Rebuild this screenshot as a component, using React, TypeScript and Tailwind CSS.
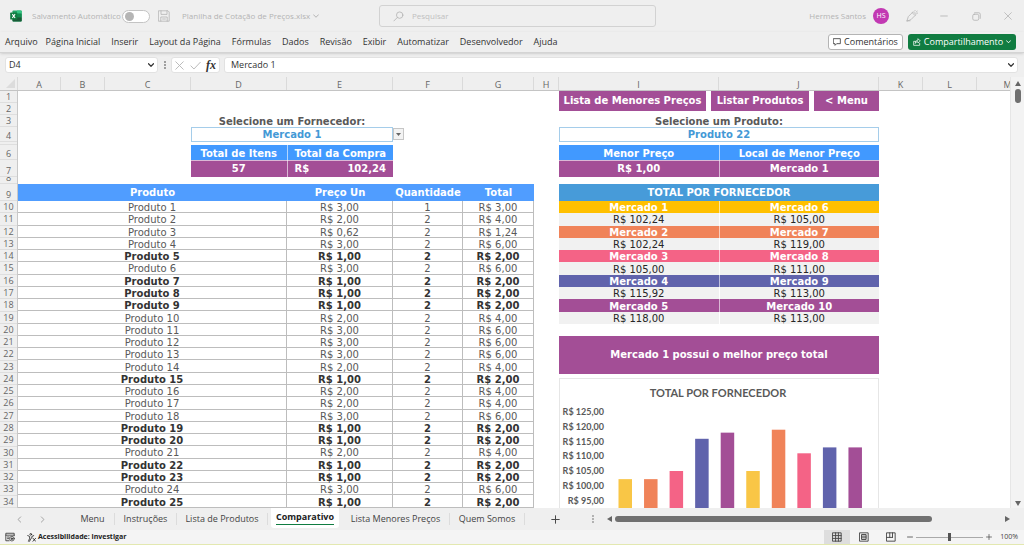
import type React from "react";
import { clsx } from "clsx";

const ribbonTabs = [
	"Arquivo",
	"Página Inicial",
	"Inserir",
	"Layout da Página",
	"Fórmulas",
	"Dados",
	"Revisão",
	"Exibir",
	"Automatizar",
	"Desenvolvedor",
	"Ajuda",
];

const columns = [
	{ name: "A", width: "w-[43px]" },
	{ name: "B", width: "w-11" },
	{ name: "C", width: "w-[86px]" },
	{ name: "D", width: "w-24" },
	{ name: "E", width: "w-[106px]" },
	{ name: "F", width: "w-[70px]" },
	{ name: "G", width: "w-[71px]" },
	{ name: "H", width: "w-[25px]" },
	{ name: "I", width: "w-40" },
	{ name: "J", width: "w-40" },
	{ name: "K", width: "w-11" },
	{ name: "L", width: "w-[54px]" },
	{ name: "M", width: "w-[62px]" },
];

const topRows = [
	{ name: "1", height: "h-3" },
	{ name: "2", height: "h-3" },
	{ name: "3", height: "h-3" },
	{ name: "4", height: "h-[15px]" },
	{ name: "5", height: "h-[3px]" },
	{ name: "6", height: "h-[15px]" },
	{ name: "7", height: "h-[17px]" },
	{ name: "8", height: "h-[7px]" },
	{ name: "9", height: "h-[17px]" },
];

const prices = [
	3, 2, 0.62, 3, 1, 3, 1, 1, 1, 2, 3, 3, 3, 2, 1, 2, 2, 3, 1, 1, 2, 1, 1, 3, 1,
];

const products = prices.map((price, i) => ({
	name: `Produto ${i + 1}`,
	price,
	quantity: i === 0 ? 1 : 2,
	best: price === 1,
}));

const suppliers = [
	{ color: "bg-[#ffc000]", left: ["Mercado 1", 102.24], right: ["Mercado 6", 105] },
	{ color: "bg-[#f08359]", left: ["Mercado 2", 102.24], right: ["Mercado 7", 119] },
	{ color: "bg-[#f46386]", left: ["Mercado 3", 105], right: ["Mercado 8", 111] },
	{ color: "bg-[#6063ac]", left: ["Mercado 4", 115.92], right: ["Mercado 9", 113] },
	{ color: "bg-[#a34e96]", left: ["Mercado 5", 118], right: ["Mercado 10", 113] },
] as const;

const chartTotals = [102.24, 102.24, 105, 115.92, 118, 105, 119, 111, 113, 113];
const chartColors = ["#f9c646", "#f08359", "#f46386", "#6063ac", "#a34e96"];
const chartTicks = [125, 120, 115, 110, 105, 100, 95];

const sheetTabs = [
	{ name: "Menu", width: "w-11" },
	{ name: "Instruções", width: "w-[62px]" },
	{ name: "Lista de Produtos", width: "w-[91px]" },
	{ name: "Comparativo", width: "w-[68px]", active: true },
	{ name: "Lista Menores Preços", width: "w-[108px]" },
	{ name: "Quem Somos", width: "w-[75px]" },
];

const money = (value: number) => `R$ ${value.toFixed(2).replace(".", ",")}`;

type IconProps = {
	children: React.ReactNode;
	size?: number;
	className?: string;
};

const Icon = ({ children, size = 12, className }: IconProps) => (
	<svg
		width={size}
		height={size}
		viewBox="0 0 12 12"
		fill="none"
		stroke="currentColor"
		strokeLinecap="round"
		strokeLinejoin="round"
		className={clsx("shrink-0", className)}
		aria-hidden="true"
	>
		{children}
	</svg>
);

const ExcelLogo = () => (
	<svg width="12" height="12" viewBox="0 0 12 12" className="shrink-0" aria-hidden="true">
		<rect x="2.5" y="0.5" width="9.2" height="11" rx="0.8" fill="#21a366" />
		<path d="M7 .5h4q.7 0 .7.7v2.4H7z" fill="#33c481" />
		<path d="M7 3.6h4.7v3.6H7z" fill="#128a4e" />
		<path d="M2.5 7.2h9.2v3.6q0 .7-.7.7H3.2q-.7 0-.7-.7z" fill="#185c37" />
		<rect x="0.2" y="2.6" width="7" height="7" rx="0.6" fill="#107c41" />
		<path d="M2.3 4.2l2.8 3.8M5.1 4.2L2.3 8" stroke="#fff" strokeWidth="1.1" />
	</svg>
);

const TitleBar = () => (
	<header className="grid h-8 shrink-0 grid-cols-[379px_277px_1fr] items-center text-[8px] text-[#b4b4b4]">
		<div className="flex items-center pl-[10px]">
			<ExcelLogo />
			<label htmlFor="autosave" className="ml-[10px] w-[90px] whitespace-nowrap">
				Salvamento Automático
			</label>
			<span className="flex h-[13px] w-7 items-center rounded-full border border-[#c4c4c4] bg-white">
				<input
					id="autosave"
					type="checkbox"
					role="switch"
					className="ml-[2px] size-[9px] appearance-none rounded-full bg-[#b5b5b5]"
				/>
			</span>
			<button type="button" aria-label="Salvar" className="ml-2">
				<Icon>
					<path d="M.8.8h9.2l1.2 1.2v9.2H.8zM3 .8v3.6h6V.8M2.8 11.2V7h6.4v4.2M4.600 9h2.8" strokeWidth=".8" />
				</Icon>
			</button>
			<button type="button" className="ml-3 flex items-center gap-[3px] whitespace-nowrap">
				Planilha de Cotação de Preços.xlsx
				<Icon size={6}>
					<path d="M1 3.5l5 5 5-5" strokeWidth="2" />
				</Icon>
			</button>
		</div>
		<label className="flex h-[22px] items-center rounded-[3px] border border-[#d2d2d2] pl-[13px]">
			<Icon size={11}>
				<circle cx="7.3" cy="4.5" r="3.5" strokeWidth=".9" />
				<path d="M4.8 7L1 10.8" strokeWidth=".9" />
			</Icon>
			<input
				aria-label="Pesquisar"
				placeholder="Pesquisar"
				className="ml-2 min-w-0 flex-1 bg-transparent outline-none placeholder:text-[#c0c0c0]"
			/>
		</label>
		<div className="flex items-center justify-end">
			<span>Hermes Santos</span>
			<span className="mx-[7px] flex size-4 items-center justify-center rounded-full bg-[#c239b3] text-[7px] text-white">
				HS
			</span>
			<button type="button" aria-label="Recursos" className="flex w-8 justify-center">
				<Icon>
					<path d="M1 10.8l1.3-4.2L6.2 2.7 9 5.5 5.2 9.4zM6.2 2.7l1-1 2.8 2.8-1 1M8.7 1l.4-.6M10 2.2l1.2-1M10.8 3.3l.8-.2M1 10.8h3" strokeWidth=".8" />
				</Icon>
			</button>
			<button type="button" aria-label="Minimizar" className="flex w-8 justify-center">
				<Icon size={8}>
					<path d="M1 6h10" strokeWidth="1.3" />
				</Icon>
			</button>
			<button type="button" aria-label="Restaurar" className="flex w-8 justify-center">
				<Icon size={9}>
					<rect x="1" y="3" width="8" height="8" rx="2" strokeWidth="1.1" />
					<path d="M3.5 1H9q2 0 2 2v5.5" strokeWidth="1.1" />
				</Icon>
			</button>
			<button type="button" aria-label="Fechar" className="flex w-8 justify-center">
				<Icon size={8}>
					<path d="M1 1l10 10M11 1L1 11" strokeWidth="1.2" />
				</Icon>
			</button>
		</div>
	</header>
);

const Ribbon = () => (
	<nav className="flex h-[21px] shrink-0 items-center border-b border-[#d4d4d4] pr-2 pl-[5px] text-[#333] shadow-sm">
		<div className="flex items-center gap-[11px]">
			{ribbonTabs.map((tab) => (
				<button key={tab} type="button" className="whitespace-nowrap first:-mr-[3px]">
					{tab}
				</button>
			))}
		</div>
		<div className="mb-px ml-auto flex gap-[5px] font-medium">
			<button
				type="button"
				className="flex h-4 w-[75px] items-center justify-center gap-[3px] rounded-[3px] border border-[#b4b4b4] bg-white"
			>
				<Icon size={8}>
					<path d="M1 1h10v7.5H5.5L3 11V8.5H1z" strokeWidth="1.2" />
				</Icon>
				Comentários
			</button>
			<button
				type="button"
				className="flex h-4 w-[108px] items-center justify-between rounded-[3px] bg-[#107c41] px-[5px] text-white"
			>
				<Icon size={8}>
					<path d="M4 5H1v6h9V8M3.5 7.5c.3-3 2-4.2 4-4.2V1L11 4.500 7.500 7.500V5.600c-1.800 0-3 .5-4 1.900z" strokeWidth="1.1" />
				</Icon>
				Compartilhamento
				<Icon size={5}>
					<path d="M1 4l5 5 5-5" strokeWidth="2.2" />
				</Icon>
			</button>
		</div>
	</nav>
);

const FormulaBar = () => (
	<div className="flex h-6 shrink-0 items-center pr-[6px] pl-[5px] text-[#333]">
		<label className="flex h-4 w-[153px] items-center rounded-[3px] border border-[#e2e2e2] bg-white px-[3px]">
			<input aria-label="Caixa de nome" defaultValue="D4" className="min-w-0 flex-1 outline-none" />
			<Icon size={6}>
				<path d="M1 3.5l5 5 5-5" strokeWidth="2.4" />
			</Icon>
		</label>
		<Icon size={8} className="mr-[2px] ml-[3px]">
			<path d="M6 1.5v.1M6 6v.1M6 10.5v.1" strokeWidth="2.4" />
		</Icon>
		<div className="flex h-4 w-[49px] items-center justify-between rounded-[3px] border border-[#e2e2e2] bg-white px-[3px] text-[#b4b4b4]">
			<button type="button" aria-label="Cancelar">
				<Icon size={9}>
					<path d="M1 1l10 10M11 1L1 11" strokeWidth="1.2" />
				</Icon>
			</button>
			<button type="button" aria-label="Inserir">
				<Icon size={11}>
					<path d="M1 6.5l3.3 3.3L11.2 2.5" strokeWidth="1" />
				</Icon>
			</button>
			<button
				type="button"
				className="font-['Liberation_Serif',serif] text-[12px] leading-3 font-bold text-[#333] italic"
			>
				fx
			</button>
		</div>
		<label className="ml-1 flex h-4 flex-1 items-center rounded-[3px] border border-[#e2e2e2] bg-white pr-[3px] pl-[6px]">
			<input aria-label="Barra de fórmulas" defaultValue="Mercado 1" className="min-w-0 flex-1 outline-none" />
			<Icon size={6}>
				<path d="M1 3.5l5 5 5-5" strokeWidth="2.4" />
			</Icon>
		</label>
	</div>
);

const ColumnHeaders = () => (
	<div className="flex h-[14px] shrink-0 border-b border-[#c4c4c4] text-[#666]">
		<div className="flex w-[18px] shrink-0 items-end justify-end border-r border-[#dadada] p-[2px]">
			<svg width="9" height="9" viewBox="0 0 9 9" aria-hidden="true">
				<path d="M9 0v9H0z" fill="#dcdcdc" />
			</svg>
		</div>
		{columns.map((column) => (
			<div
				key={column.name}
				className={clsx("shrink-0 border-r border-[#dadada] text-center leading-[15px]", column.width)}
			>
				{column.name}
			</div>
		))}
	</div>
);

const RowHeaders = () => (
	<div className="w-[18px] shrink-0 border-r border-[#c8c8c8] bg-[#efefef] text-center text-[#666]">
		{topRows.map((row) => (
			<div
				key={row.name}
				className={clsx("flex items-end justify-center overflow-hidden border-b border-[#dedede]", row.height)}
			>
				<span className="leading-[10px]">{row.name}</span>
			</div>
		))}
		<div className="grid h-[307px] auto-rows-fr">
			{products.map((product, i) => (
				<div key={product.name} className="border-b border-[#dedede] pt-px leading-[10px]">
					{i + 10}
				</div>
			))}
		</div>
	</div>
);

type PickerProps = {
	id: string;
	label: string;
	value: string;
};

const Picker = ({ id, label, value }: PickerProps) => (
	<>
		<label htmlFor={id} className="block h-3 pt-[2px] text-center leading-[10px] font-bold text-[#595959]">
			{label}
		</label>
		<select
			id={id}
			className="block h-[15px] w-full appearance-none border border-[#a5cdea] bg-white text-center font-bold text-[#4499d6] [text-align-last:center]"
		>
			<option>{value}</option>
		</select>
	</>
);

type SummaryProps = {
	heads: string[];
	cells: React.ReactNode[];
	split: string;
};

const Summary = ({ heads, cells, split }: SummaryProps) => (
	<table className="mt-[3px] w-full table-fixed font-bold text-white">
		<thead>
			<tr className="h-[15px] bg-[#4199ff]">
				{heads.map((head) => (
					<th
						key={head}
						className={clsx("border-b border-white/60 p-0 pt-[3px] leading-[10px] first:border-r", split)}
					>
						{head}
					</th>
				))}
			</tr>
		</thead>
		<tbody>
			<tr className="h-[17px] bg-[#a34e96]">
				{cells.map((cell, i) => (
					<td key={heads[i]} className="border-white/60 p-0 text-center leading-3 first:border-r">
						{cell}
					</td>
				))}
			</tr>
		</tbody>
	</table>
);

const ProductTable = () => (
	<table className="mt-[7px] w-full table-fixed border-separate border-spacing-0 text-center text-[#595959]">
		<colgroup>
			<col className="w-[269px]" />
			<col className="w-[106px]" />
			<col className="w-[70px]" />
			<col className="w-[71px]" />
		</colgroup>
		<thead>
			<tr className="h-[17px] bg-[#509dff] text-white">
				{["Produto", "Preço Un", "Quantidade", "Total"].map((head) => (
					<th key={head} className="p-0 leading-3">
						{head}
					</th>
				))}
			</tr>
		</thead>
		<tbody className="h-[307px]">
			{products.map((product) => (
				<tr
					key={product.name}
					className={clsx(
						"*:border-r *:border-b *:border-[#bdbdbd] *:p-0 *:pt-[2px] *:leading-[9px]",
						product.best && "font-bold text-[#333]",
					)}
				>
					<td>{product.name}</td>
					<td>{money(product.price)}</td>
					<td>{product.quantity}</td>
					<td>{money(product.price * product.quantity)}</td>
				</tr>
			))}
		</tbody>
	</table>
);

const SupplierTable = () => (
	<table className="mt-[7px] h-[140px] w-full table-fixed text-center text-[#262626]">
		<thead>
			<tr className="h-[17px] bg-[#479bd9] text-white">
				<th colSpan={2} className="p-0 leading-3">
					TOTAL POR FORNECEDOR
				</th>
			</tr>
		</thead>
		{suppliers.map((row) => (
			<tbody key={row.color}>
				<tr className={clsx("text-white *:border-white/60 *:p-0 *:pt-[2px] *:leading-[10px]", row.color)}>
					<th className="border-r">{row.left[0]}</th>
					<th>{row.right[0]}</th>
				</tr>
				<tr className="bg-[#f1f1f1] *:p-0 *:pt-[2px] *:leading-[10px]">
					<td className="border-r border-white">{money(row.left[1])}</td>
					<td>{money(row.right[1])}</td>
				</tr>
			</tbody>
		))}
	</table>
);

const SupplierChart = () => (
	<figure className="mt-1 w-full border border-[#e6e6e6] bg-white">
		<svg
			viewBox="0 0 318 180"
			className="block w-full font-['Lato',sans-serif] font-bold"
			fill="#595959"
			role="img"
			aria-label="Total por fornecedor"
		>
			<text x="158" y="18" textAnchor="middle" fontSize="11">
				TOTAL POR FORNECEDOR
			</text>
			{chartTicks.map((tick, i) => (
				<text key={tick} x="44" y={36 + i * 14.75} textAnchor="end" fontSize="9">
					{money(tick)}
				</text>
			))}
			{chartTotals.map((total, i) => {
				const top = 33 + (125 - total) * 2.95;
				return (
					<rect
						key={i}
						x={58.5 + i * 25.55}
						y={top}
						width="13.5"
						height={180 - top}
						fill={chartColors[i % 5]}
					/>
				);
			})}
		</svg>
	</figure>
);

const navButton =
	"flex items-center justify-center bg-[#a34e96] text-[10px] leading-3 font-bold whitespace-nowrap text-white";

const Sheet = () => (
	<div className="flex min-h-0 flex-1 overflow-hidden bg-white font-['DejaVu_Sans',Verdana,sans-serif] text-[10px]">
		<div className="font-['Open_Sans',sans-serif] text-[9px]">
			<RowHeaders />
		</div>
		<section className="w-[516px] shrink-0 pt-6">
			<div className="relative ml-[173px] w-[202px]">
				<Picker id="supplier" label="Selecione um Fornecedor:" value="Mercado 1" />
				<button
					type="button"
					aria-label="Abrir lista"
					className="absolute top-[13px] left-full flex h-3 w-[11px] items-center justify-center border border-[#c6c6c6] bg-[#f3f3f3]"
				>
					<svg width="5" height="3" viewBox="0 0 5 3" aria-hidden="true">
						<path d="M0 0h5L2.5 3z" fill="#666" />
					</svg>
				</button>
				<Summary
					heads={["Total de Itens", "Total da Compra"]}
					split="first:w-24"
					cells={[
						"57",
						<span className="flex justify-between px-[7px]" key="total">
							<span>R$</span>
							<span>102,24</span>
						</span>,
					]}
				/>
			</div>
			<ProductTable />
		</section>
		<section className="ml-[25px] w-80 shrink-0">
			<div className="flex h-5 justify-between">
				<button type="button" className={clsx(navButton, "w-[147px]")}>
					Lista de Menores Preços
				</button>
				<button type="button" className={clsx(navButton, "w-[98px]")}>
					Listar Produtos
				</button>
				<button type="button" className={clsx(navButton, "w-[65px]")}>
					&lt; Menu
				</button>
			</div>
			<div className="mt-1">
				<Picker id="product" label="Selecione um Produto:" value="Produto 22" />
			</div>
			<Summary
				heads={["Menor Preço", "Local de Menor Preço"]}
				split="w-1/2"
				cells={["R$ 1,00", "Mercado 1"]}
			/>
			<SupplierTable />
			<p className="mt-3 flex h-[38px] items-center justify-center bg-[#a34e96] font-bold text-white">
				Mercado 1 possui o melhor preço total
			</p>
			<SupplierChart />
		</section>
	</div>
);

const VerticalScroll = () => (
	<div className="flex w-[14px] shrink-0 flex-col items-center border-l border-[#e6e6e6] bg-[#f3f3f3] pt-1 pb-[2px] text-[#666]">
		<svg width="6" height="5" viewBox="0 0 6 5" aria-hidden="true">
			<path d="M0 5h6L3 0z" fill="currentColor" />
		</svg>
		<div className="mt-[3px] h-[14px] w-[6px] rounded-full bg-[#707070]" />
		<svg width="6" height="5" viewBox="0 0 6 5" className="mt-auto" aria-hidden="true">
			<path d="M0 0h6L3 5z" fill="currentColor" />
		</svg>
	</div>
);

const SheetTabs = () => (
	<div className="flex h-[22px] shrink-0 items-center pr-[14px] text-[#444]">
		<div className="flex w-[71px] shrink-0 gap-4 pl-4 text-[#999]">
			<button type="button" aria-label="Planilha anterior">
				<Icon size={7}>
					<path d="M8 1.5L3.5 6 8 10.5" strokeWidth="1.5" />
				</Icon>
			</button>
			<button type="button" aria-label="Próxima planilha">
				<Icon size={7}>
					<path d="M4 1.5L8.5 6 4 10.5" strokeWidth="1.5" />
				</Icon>
			</button>
		</div>
		<div className="flex h-full items-center">
			{sheetTabs.map((tab) => (
				<button
					key={tab.name}
					type="button"
					className={clsx(
						"flex shrink-0 items-center justify-center whitespace-nowrap",
						tab.width,
						tab.active
							? "mx-[3px] h-5 self-start rounded-b-[3px] bg-white font-bold text-[#222]"
							: "h-3 border-r border-[#dcdcdc]",
					)}
				>
					<span className={clsx(tab.active && "border-b border-[#107c41] pb-px")}>{tab.name}</span>
				</button>
			))}
		</div>
		<button type="button" aria-label="Nova planilha" className="ml-[26px]">
			<Icon size={9}>
				<path d="M6 1v10M1 6h10" strokeWidth="1.3" />
			</Icon>
		</button>
		<Icon size={8} className="ml-[29px]">
			<path d="M6 1.5v.1M6 6v.1M6 10.5v.1" strokeWidth="2" />
		</Icon>
		<div className="ml-[10px] flex flex-1 items-center text-[#666]">
			<svg width="5" height="6" viewBox="0 0 5 6" aria-hidden="true">
				<path d="M5 0v6L0 3z" fill="currentColor" />
			</svg>
			<div className="mx-[3px] flex-1">
				<div className="h-[6px] w-[82%] rounded-full bg-[#707070]" />
			</div>
			<svg width="5" height="6" viewBox="0 0 5 6" aria-hidden="true">
				<path d="M0 0v6l5-3z" fill="currentColor" />
			</svg>
		</div>
	</div>
);

const StatusBar = () => (
	<footer className="flex h-[15px] shrink-0 items-center border-b border-[#e3e8b0] bg-[#f4f4f4] pr-[6px] pl-[5px] text-[#444]">
		<button type="button" aria-label="Gravar macro">
			<Icon size={10}>
				<path d="M5 10.5H1v-9h10v3M1 3.8h10M3 6h2M3 8h1.5" strokeWidth="1.1" />
				<circle cx="8.3" cy="8" r="2.8" strokeWidth="1" />
				<circle cx="8.3" cy="8" r="1" fill="currentColor" />
			</Icon>
		</button>
		<button type="button" className="ml-3 flex items-center gap-[2px] text-[7px] font-bold text-[#222]">
			<Icon size={9}>
				<circle cx="5" cy="1.8" r="1.2" strokeWidth="1" />
				<path d="M1 3.5l2.5 1v2.5L2 11M9 3.5l-2.5 1v2L5 7.5 3.5 11M8 7l3.5 4M11.5 7L8 11" strokeWidth="1.1" />
			</Icon>
			Acessibilidade: investigar
		</button>
		<div className="ml-auto flex h-full items-center">
			<button type="button" aria-label="Normal" className="flex h-full w-[26px] items-center justify-center bg-[#dedede]">
				<Icon size={10}>
					<path d="M1 1h10v10H1zM1 4.3h10M1 7.7h10M4.3 1v10M7.7 1v10" strokeWidth="1.1" />
				</Icon>
			</button>
			<button type="button" aria-label="Layout da Página" className="flex w-[27px] justify-center">
				<Icon size={10}>
					<path d="M1 1h10v10H1zM3.5 3h5v6h-5zM3.5 5h5M3.5 7h5" strokeWidth="1.1" />
				</Icon>
			</button>
			<button type="button" aria-label="Quebra de página" className="flex w-[27px] justify-center">
				<Icon size={10}>
					<path d="M1 1h10v10H1zM4.5 1v5.5M7.8 1v5.5M1 6.5h6.8" strokeWidth="1.1" />
				</Icon>
			</button>
			<button type="button" aria-label="Reduzir" className="ml-[3px]">
				<Icon size={6}>
					<path d="M1 6h10" strokeWidth="1.6" />
				</Icon>
			</button>
			<input
				type="range"
				aria-label="Zoom"
				defaultValue={50}
				className="mx-[3px] h-2 w-[67px] appearance-none bg-[linear-gradient(#aaa,#aaa)] bg-[length:100%_1px] bg-center bg-no-repeat [&::-webkit-slider-thumb]:h-2 [&::-webkit-slider-thumb]:w-[3px] [&::-webkit-slider-thumb]:appearance-none [&::-webkit-slider-thumb]:bg-[#555]"
			/>
			<button type="button" aria-label="Ampliar">
				<Icon size={6}>
					<path d="M1 6h10M6 1v10" strokeWidth="1.4" />
				</Icon>
			</button>
			<span className="ml-2 text-[7px]">100%</span>
		</div>
	</footer>
);

export default function App(): React.ReactElement {
	return (
		<main className="flex h-screen flex-col overflow-hidden bg-[#efefef] font-['Open_Sans','Noto_Sans',sans-serif] text-[9px] leading-3">
			<TitleBar />
			<Ribbon />
			<FormulaBar />
			<div className="flex min-h-0 flex-1">
				<div className="flex min-w-0 flex-1 flex-col overflow-hidden">
					<ColumnHeaders />
					<Sheet />
				</div>
				<VerticalScroll />
			</div>
			<SheetTabs />
			<StatusBar />
		</main>
	);
}
